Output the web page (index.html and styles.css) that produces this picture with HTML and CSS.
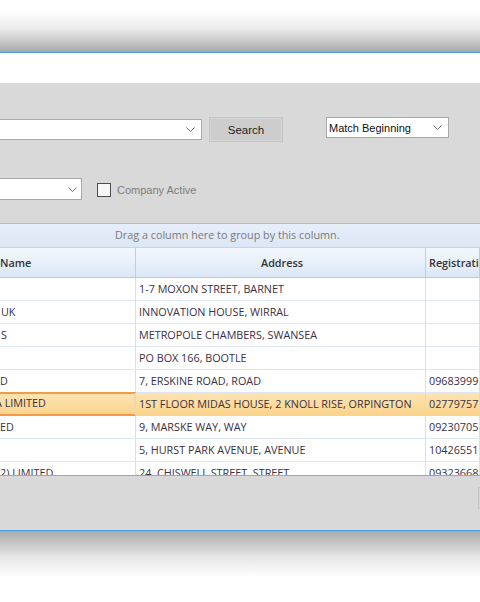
FILE: index.html
```html
<!DOCTYPE html>
<html lang="en">
<head>
    <meta charset="UTF-8">
    <title>Company Search</title>
    <link rel="stylesheet" href="styles.css">
</head>
<body>
    <div class="shadow-top"></div>
    <div class="window">
        <div class="titlebar"></div>
        <div class="form">
            <div class="search-row">
                <div class="combo combo-main">
                    <svg class="chev" width="9" height="5" viewBox="0 0 9 5"><polyline points="0.5,0.5 4.5,4.5 8.5,0.5"/></svg>
                </div>
                <button class="btn btn-search">Search</button>
                <div class="combo combo-match">
                    <span>Match Beginning</span>
                    <svg class="chev" width="9" height="5" viewBox="0 0 9 5"><polyline points="0.5,0.5 4.5,4.5 8.5,0.5"/></svg>
                </div>
            </div>

            <div class="filter-row">
                <div class="combo combo-small">
                    <svg class="chev" width="9" height="5" viewBox="0 0 9 5"><polyline points="0.5,0.5 4.5,4.5 8.5,0.5"/></svg>
                </div>
                <label class="check"><span class="box"></span>Company Active</label>
            </div>

            <div class="grid">
                <div class="group-panel">Drag a column here to group by this column.</div>
                <div class="grid-row grid-header">
                    <div class="cell cell-first cut-sm">Name</div>
                    <div class="cell cell-center">Address</div>
                    <div class="cell">Registration No</div>
                </div>
                <div class="grid-body">
                    <div class="grid-row">
                        <div class="cell cell-first"></div>
                        <div class="cell">1-7 MOXON STREET, BARNET</div>
                        <div class="cell"></div>
                    </div>
                    <div class="grid-row">
                        <div class="cell cell-first">UK</div>
                        <div class="cell">INNOVATION HOUSE, WIRRAL</div>
                        <div class="cell"></div>
                    </div>
                    <div class="grid-row">
                        <div class="cell cell-first">S</div>
                        <div class="cell">METROPOLE CHAMBERS, SWANSEA</div>
                        <div class="cell"></div>
                    </div>
                    <div class="grid-row">
                        <div class="cell cell-first"></div>
                        <div class="cell">PO BOX 166, BOOTLE</div>
                        <div class="cell"></div>
                    </div>
                    <div class="grid-row">
                        <div class="cell cell-first cut-sm">D</div>
                        <div class="cell">7, ERSKINE ROAD, ROAD</div>
                        <div class="cell">09683999</div>
                    </div>
                    <div class="grid-row selected">
                        <div class="cell cell-first focused cut-lg">A LIMITED</div>
                        <div class="cell">1ST FLOOR MIDAS HOUSE, 2 KNOLL RISE, ORPINGTON</div>
                        <div class="cell">02779757</div>
                    </div>
                    <div class="grid-row">
                        <div class="cell cell-first cut-sm">ED</div>
                        <div class="cell">9, MARSKE WAY, WAY</div>
                        <div class="cell">09230705</div>
                    </div>
                    <div class="grid-row">
                        <div class="cell cell-first"></div>
                        <div class="cell">5, HURST PARK AVENUE, AVENUE</div>
                        <div class="cell">10426551</div>
                    </div>
                    <div class="grid-row">
                        <div class="cell cell-first cut-sm">2) LIMITED</div>
                        <div class="cell">24, CHISWELL STREET, STREET</div>
                        <div class="cell">09323668</div>
                    </div>
                </div>
            </div>

            <div class="footer">
                <button class="btn btn-edge">Close</button>
            </div>
        </div>
    </div>
    <div class="shadow-bottom"></div>
</body>
</html>
```

FILE: styles.css
```css
html, body {
    margin: 0;
    width: 480px;
    height: 602px;
    overflow: hidden;
    background-color: #fff;
}
body {
    font-family: "Liberation Sans", Arial, sans-serif;
    font-size: 11px;
    color: #111;
}

/* sombra de la ventana */
.shadow-top {
    height: 52px;
    background: linear-gradient(#fff 0, #fff 10px, #ececec 28px, #c4c4c4 43px, #a6a6a6 52px);
}
.shadow-bottom {
    height: 71px;
    background: linear-gradient(#a9a9a9 0, #c2c2c2 10px, #e6e6e6 26px, #fff 46px, #fff 71px);
}

.window {
    border-top: 1px solid #4a9be0;
    border-bottom: 1px solid #4a9be0;
}
.titlebar {
    height: 30px;
    background-color: #fff;
}
.form {
    height: 447px;
    background-color: #d9d9d9;
    display: flex;
    flex-direction: column;
}

/* controles */
.combo {
    box-sizing: border-box;
    background-color: #fff;
    border: 1px solid #a9a9a9;
    display: flex;
    align-items: center;
    justify-content: space-between;
    padding: 0 6px 0 2px;
}
.chev polyline {
    fill: none;
    stroke: #6d6d6d;
    stroke-width: 1;
}
.btn {
    box-sizing: border-box;
    font-family: "Liberation Sans", Arial, sans-serif;
    font-size: 11px;
    color: #1e1e1e;
    background-color: #cdcdcd;
    border: 1px solid #c4c4c4;
    box-shadow: inset 0 0 0 1px #d6d6d6;
    padding: 0;
}

.search-row {
    display: flex;
    align-items: flex-start;
    margin-top: 34px;
    height: 25px;
}
.combo-main {
    width: 213px;
    height: 21px;
    margin-top: 2px;
    margin-left: -11px;
    justify-content: flex-end;
}
.btn-search {
    width: 74px;
    height: 25px;
    margin-left: 7px;
    font-size: 11.5px;
}
.combo-match {
    width: 123px;
    height: 21px;
    margin-left: 43px;
}

.filter-row {
    display: flex;
    align-items: center;
    margin-top: 36px;
    height: 22px;
}
.combo-small {
    width: 93px;
    height: 22px;
    margin-left: -11px;
    justify-content: flex-end;
    padding-right: 4px;
}
.check {
    display: flex;
    align-items: center;
    margin-left: 15px;
    margin-top: 2px;
    color: #7d7d7d;
    gap: 6px;
}
.check .box {
    box-sizing: border-box;
    width: 14px;
    height: 14px;
    border: 1px solid #4e4e4e;
    background-color: #f7f7f7;
}

/* tabla de resultados */
.grid {
    margin-top: 23px;
    border-top: 1px solid #a9bdd6;
    border-bottom: 1px solid #9ea6b2;
    font-family: "Open Sans", "Noto Sans", sans-serif;
    font-size: 10.8px;
    color: #3a3144;
}
.group-panel {
    height: 23px;
    line-height: 22px;
    padding-left: 115px;
    color: #7a7a7a;
    background: linear-gradient(#e6eef9, #dce7f5);
}
.grid-row {
    display: grid;
    grid-template-columns: 136px 290px 1fr;
    height: 23px;
    box-sizing: border-box;
    border-bottom: 1px solid #dde7f3;
    background-color: #fff;
}
.cell {
    box-sizing: border-box;
    border-right: 1px solid #d5e1f0;
    padding-left: 3px;
    line-height: 21px;
    white-space: nowrap;
    overflow: hidden;
}
.cell-first {
    padding-left: 1px;
}
.cut-sm {
    text-indent: -1px;
}
.cut-lg {
    text-indent: -6px;
}
.cell-center {
    text-align: center;
}
.grid-header {
    height: 31px;
    border-top: 1px solid #c6d6ea;
    border-bottom: 1px solid #b6c9e2;
    background: linear-gradient(#f4f8fd, #dbe7f6);
    font-weight: 600;
    color: #333;
}
.grid-header .cell {
    line-height: 29px;
    border-right-color: #bccde4;
}
.grid-body {
    height: 197px;
    overflow: hidden;
}
.selected {
    background: linear-gradient(#fde4b4, #fbd48c);
    border-bottom-color: #f3d39c;
}
.selected .cell {
    border-right-color: #f1d6a8;
}
.focused {
    border: 2px solid #f59b45;
    border-left: none;
    line-height: 18px;
    margin-top: -1px;
    height: 24px;
}

.footer {
    height: 54px;
}
.btn-edge {
    width: 80px;
    height: 22px;
    margin-top: 11px;
    margin-left: 478px;
}
```
